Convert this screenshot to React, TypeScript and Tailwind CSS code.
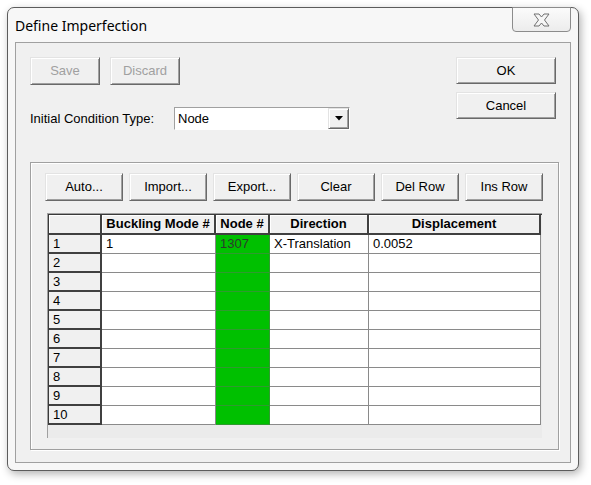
import React from "react";

const rows = [
  { n: "1", mode: "1", node: "1307", dir: "X-Translation", disp: "0.0052" },
  ...Array.from({ length: 9 }, (_, i) => ({ n: String(i + 2), mode: "", node: "", dir: "", disp: "" })),
];

function Btn({ label, className = "", disabled = false }: { label: string; className?: string; disabled?: boolean }) {
  return (
    <button
      className={`flex items-center justify-center border border-t-[#e3e3e3] border-l-[#e3e3e3] border-r-[#696969] border-b-[#696969] bg-[#f0f0f0] text-[13px] shadow-[inset_1px_1px_0_#ffffff,inset_-1px_-1px_0_#a0a0a0] ${
        disabled ? "text-[#a0a0a0]" : "text-black"
      } ${className}`}
    >
      {label}
    </button>
  );
}

function CloseGlyph() {
  return (
    <svg width="17" height="14" viewBox="0 0 17 14">
      <path
        d="M1 1 H6 L8.5 4 L11 1 H16 L11.5 7 L16 13 H11 L8.5 10 L6 13 H1 L5.5 7 Z"
        fill="#f6f6f6"
        stroke="#707070"
        strokeWidth="1"
        strokeLinejoin="round"
      />
    </svg>
  );
}

export default function App() {
  return (
    <div className="h-[485px] w-[591px] bg-white pl-[7px] pt-[7px] font-['Liberation_Sans',Arial,sans-serif] text-black">
      <div className="flex h-[464px] w-[572px] flex-col rounded-[7px] border border-[#5c5c5c] bg-[#f7f7f7] px-[7px] pb-[7px] shadow-[2px_3px_8px_rgba(0,0,0,0.3)]">
        {/* title bar */}
        <div className="flex h-[34px] items-start justify-between">
          <span className="pt-[8px] font-['Noto_Sans',sans-serif] text-[14px] leading-[19px]">Define Imperfection</span>
          <div className="-mt-px flex h-[25px] w-[59px] items-center justify-center rounded-b-[4px] border border-[#8c8c8c] bg-[linear-gradient(#fbfbfb,#ececec)]">
            <CloseGlyph />
          </div>
        </div>

        {/* client */}
        <div className="flex h-[421px] flex-col border border-[#a0a0a0] bg-[#f0f0f0] px-[14px] pt-[14px]">
          <div className="flex justify-between">
            <div className="flex flex-col">
              <div className="flex gap-[10px]">
                <Btn label="Save" disabled className="h-[28px] w-[70px]" />
                <Btn label="Discard" disabled className="h-[28px] w-[70px]" />
              </div>
              <div className="mt-[22px] flex items-center">
                <span className="w-[144px] text-[13px]">Initial Condition Type:</span>
                <div className="flex h-[23px] w-[176px] border border-t-[#a0a0a0] border-l-[#a0a0a0] border-r-white border-b-white shadow-[inset_1px_1px_0_#696969]">
                  <div className="flex flex-1 items-center bg-white pl-[3px] pt-px text-[13px]">Node</div>
                  <div className="flex w-[21px] items-center justify-center border border-t-[#e3e3e3] border-l-[#e3e3e3] border-r-[#696969] border-b-[#696969] bg-[#f0f0f0] shadow-[inset_1px_1px_0_#ffffff,inset_-1px_-1px_0_#a0a0a0]">
                    <svg width="8" height="5" viewBox="0 0 8 5">
                      <path d="M0 0 H8 L4 4.5 Z" fill="#000" />
                    </svg>
                  </div>
                </div>
              </div>
            </div>
            <div className="flex flex-col gap-[8px]">
              <Btn label="OK" className="h-[27px] w-[100px]" />
              <Btn label="Cancel" className="h-[27px] w-[100px]" />
            </div>
          </div>

          {/* group box */}
          <div className="mt-[32px] flex h-[288px] w-[529px] flex-col border border-[#a0a0a0] pb-[11px] pl-[14px] pt-[10px] shadow-[inset_1px_1px_0_#ffffff,1px_1px_0_#ffffff]">
            <div className="flex gap-[6px]">
              {["Auto...", "Import...", "Export...", "Clear", "Del Row", "Ins Row"].map((l) => (
                <Btn key={l} label={l} className="h-[28px] w-[78px]" />
              ))}
            </div>

            <div className="ml-[2px] mt-[12px] h-[225px] w-[495px] border-l border-t border-[#a0a0a0] bg-[#ebebeb]">
              <div className="w-[494px] border-l border-t border-[#3a3a3a] text-[13px]">
                <div className="flex h-[20px] font-bold">
                  {[
                    ["", "w-[53px]"],
                    ["Buckling Mode #", "w-[114px]"],
                    ["Node #", "w-[54px]"],
                    ["Direction", "w-[99px]"],
                    ["Displacement", "w-[172px]"],
                  ].map(([t, w]) => (
                    <div
                      key={w + t}
                      className={`${w} flex items-center justify-center border-b-2 border-r-2 border-[#404040] bg-[#f0f0f0] shadow-[inset_1px_1px_0_#ffffff]`}
                    >
                      {t}
                    </div>
                  ))}
                </div>
                {rows.map((r) => (
                  <div key={r.n} className="flex h-[19px]">
                    <div className="flex w-[53px] items-center border-b-2 border-r-2 border-[#404040] bg-[#f0f0f0] pl-[4px]">{r.n}</div>
                    <div className="flex w-[114px] items-center border-b border-r border-[#8a8a8a] bg-white pl-[4px]">{r.mode}</div>
                    <div className="flex w-[54px] items-center border-b border-r border-[#2f9a2f] bg-[#00c000] pl-[4px] text-[#2d3a2d]">{r.node}</div>
                    <div className="flex w-[99px] items-center border-b border-r border-[#8a8a8a] bg-white pl-[4px]">{r.dir}</div>
                    <div className="flex w-[172px] items-center border-b border-r border-[#8a8a8a] bg-white pl-[4px]">{r.disp}</div>
                  </div>
                ))}
              </div>
            </div>
          </div>
        </div>
      </div>
    </div>
  );
}
